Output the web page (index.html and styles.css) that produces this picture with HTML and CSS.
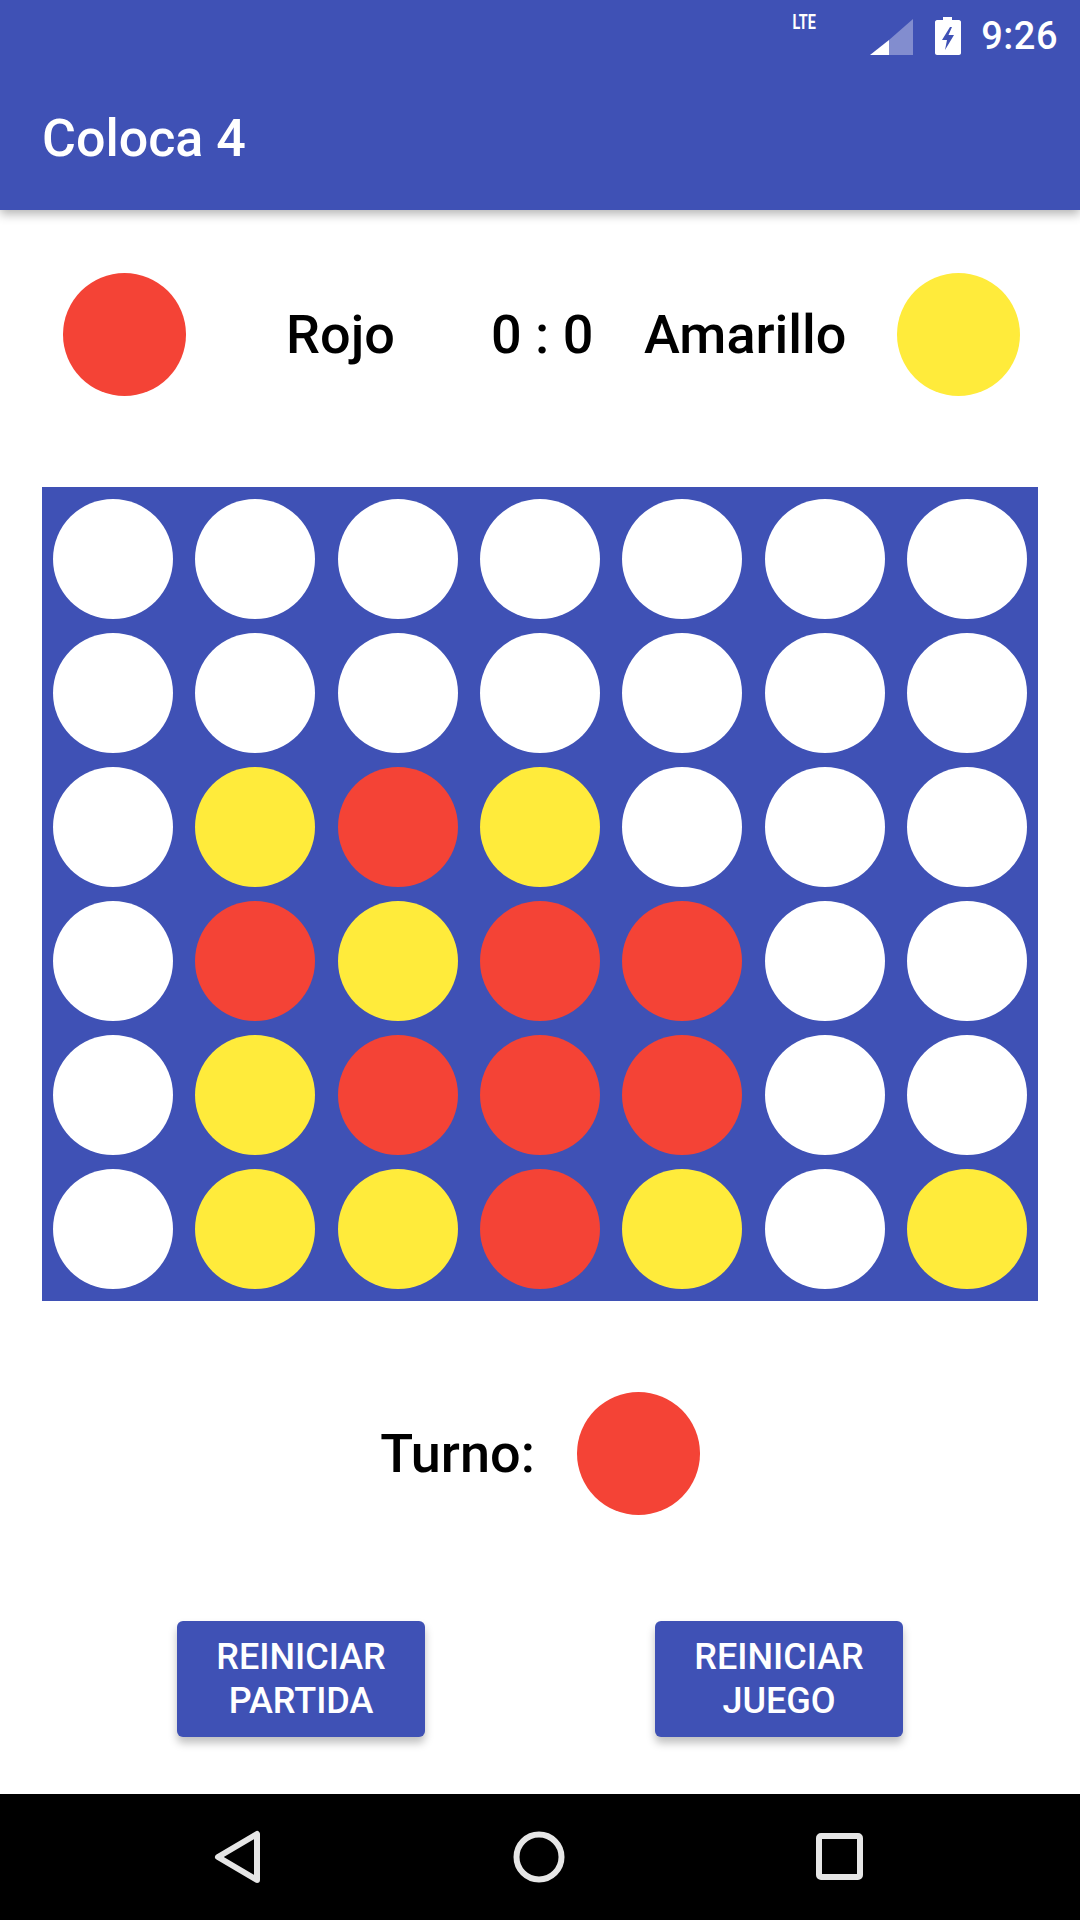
FILE: index.html
```html
<!DOCTYPE html>
<html lang="es">
<head>
<meta charset="utf-8">
<title>Coloca 4</title>
<link rel="stylesheet" href="styles.css">
</head>
<body>
<div class="phone">
  <header class="appbar">
    <div class="status">
      <svg class="ic-lte" width="48" height="42" viewBox="0 0 48 42">
        <path class="dim" d="M48 3V39H24V24Z"/>
        <path class="full" d="M24 24V39H5Z"/>
      </svg>
      <span class="lte">LTE</span>
      <svg class="ic-batt" width="26" height="38" viewBox="0 0 26 38">
        <path class="full" fill-rule="evenodd" d="M8 0H17V3H24C25 3 26 4 26 5V36C26 37 25 38 24 38H2C1 38 0 37 0 36V5C0 4 1 3 2 3H8ZM15 10L7 23H12L10 33L19 18H13.5L17 10Z"/>
      </svg>
      <span class="time">9:26</span>
    </div>
    <div class="toolbar">Coloca 4</div>
  </header>
  <main class="content">
    <section class="score">
      <span class="disc disc-lg red"></span>
      <span class="name name-red">Rojo</span>
      <span class="points">0 : 0</span>
      <span class="name name-yellow">Amarillo</span>
      <span class="disc disc-lg yellow"></span>
    </section>
    <section class="board">
      <span class="disc w"></span><span class="disc w"></span><span class="disc w"></span><span class="disc w"></span><span class="disc w"></span><span class="disc w"></span><span class="disc w"></span>
      <span class="disc w"></span><span class="disc w"></span><span class="disc w"></span><span class="disc w"></span><span class="disc w"></span><span class="disc w"></span><span class="disc w"></span>
      <span class="disc w"></span><span class="disc yellow"></span><span class="disc red"></span><span class="disc yellow"></span><span class="disc w"></span><span class="disc w"></span><span class="disc w"></span>
      <span class="disc w"></span><span class="disc red"></span><span class="disc yellow"></span><span class="disc red"></span><span class="disc red"></span><span class="disc w"></span><span class="disc w"></span>
      <span class="disc w"></span><span class="disc yellow"></span><span class="disc red"></span><span class="disc red"></span><span class="disc red"></span><span class="disc w"></span><span class="disc w"></span>
      <span class="disc w"></span><span class="disc yellow"></span><span class="disc yellow"></span><span class="disc red"></span><span class="disc yellow"></span><span class="disc w"></span><span class="disc yellow"></span>
    </section>
    <section class="turn">
      <span class="turn-label">Turno:</span>
      <span class="disc disc-lg red"></span>
    </section>
    <section class="actions">
      <button class="btn" type="button">REINICIAR<br>PARTIDA</button>
      <button class="btn" type="button">REINICIAR<br>JUEGO</button>
    </section>
  </main>
  <footer class="navbar">
    <svg width="48" height="54" viewBox="0 0 48 54"><path class="nav" d="M43 4V50L4 27Z"/></svg>
    <svg width="54" height="54" viewBox="0 0 54 54"><circle class="nav" cx="27" cy="27" r="22.5"/></svg>
    <svg width="48" height="48" viewBox="0 0 48 48"><rect class="nav" x="3" y="3" width="41" height="41" rx="2"/></svg>
  </footer>
</div>
</body>
</html>
```
FILE: styles.css
```css
* { box-sizing: border-box; }
html, body { margin: 0; padding: 0; }
body { background: #fff; font-family: Roboto, "Liberation Sans", sans-serif; color: #000; }
.phone { width: 1080px; height: 1920px; display: flex; flex-direction: column; overflow: hidden; }

.appbar { height: 210px; background: #3f51b5; color: #fff; box-shadow: 0 4px 10px rgba(0,0,0,.3); position: relative; z-index: 1; flex: none; }
.status { height: 72px; display: flex; align-items: center; justify-content: flex-end; padding-right: 22px; position: relative; }
.ic-lte { margin-right: 22px; margin-top: 2px; }
.lte { position: absolute; right: 260px; top: 10px; font-size: 20px; font-weight: 700; transform: scaleX(.72); letter-spacing: 0; }
.ic-batt { margin-right: 20px; }
.time { font-size: 38px; font-weight: 500; letter-spacing: .5px; }
.dim { fill: rgba(255,255,255,.35); }
.full { fill: #fff; }
.toolbar { height: 138px; padding: 0 0 6px 42px; display: flex; align-items: center; font-size: 52px; font-weight: 500; }

.content { flex: 1; display: flex; flex-direction: column; }
.disc { display: block; width: 120px; height: 120px; border-radius: 50%; }
.disc-lg { width: 123px; height: 123px; flex: none; }
.red { background: #f44336; }
.yellow { background: #ffeb3b; }
.w { background: #fff; }

.score { display: flex; align-items: center; height: 123px; margin-top: 63px; padding: 0 63px; font-size: 54px; font-weight: 500; }
.name-red { margin-left: 100px; width: 105px; text-align: center; }
.points { margin-left: 100px; width: 100px; text-align: center; white-space: nowrap; }
.name-yellow { margin-left: 53px; width: 200px; text-align: center; }
.score .yellow { margin-left: 53px; }

.board { margin: 91px 42px 0; height: 814px; background: #3f51b5; padding: 5px 0; display: grid; grid-template-columns: repeat(7, 1fr); grid-template-rows: repeat(6, 134px); place-items: center; }

.turn { margin-top: 91px; display: flex; align-items: center; justify-content: center; padding-left: 0; height: 123px; font-size: 54px; font-weight: 500; gap: 42px; }
.actions { margin-top: 106px; display: flex; justify-content: space-between; padding: 0 177px; }
.btn { width: 248px; height: 116px; padding: 0; border: 0; border-radius: 6px; background: #3f51b5; color: #fff; font: 500 36px/44px Roboto, "Liberation Sans", sans-serif; box-shadow: 0 6px 8px rgba(0,0,0,.25); }

.navbar { height: 126px; background: #000; flex: none; display: flex; align-items: center; justify-content: center; gap: 0; position: relative; padding: 0 216px 0 214px; justify-content: space-between; }
.nav { fill: none; stroke: #e6e6e6; stroke-width: 6; stroke-linejoin: round; }
```
